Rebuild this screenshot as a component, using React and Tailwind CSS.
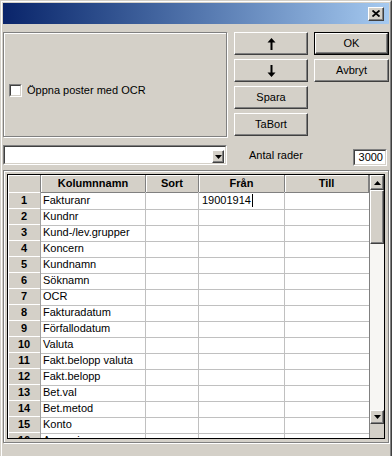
import React from "react";

const rows = [
  "Fakturanr",
  "Kundnr",
  "Kund-/lev.grupper",
  "Koncern",
  "Kundnamn",
  "Söknamn",
  "OCR",
  "Fakturadatum",
  "Förfallodatum",
  "Valuta",
  "Fakt.belopp valuta",
  "Fakt.belopp",
  "Bet.val",
  "Bet.metod",
  "Konto",
  "Ansvarig",
];

function Raised({ children, className = "" }) {
  return (
    <div
      className={`flex items-center justify-center border border-t-white border-l-white border-r-[#404040] border-b-[#404040] bg-[#d4d0c8] shadow-[inset_-1px_-1px_0_#808080] ${className}`}
    >
      {children}
    </div>
  );
}

function Btn({ children, def = false }) {
  if (def) {
    return (
      <div className="h-[23px] w-full border border-black">
        <Raised className="h-full w-full text-[11px] text-black">{children}</Raised>
      </div>
    );
  }
  return <Raised className="h-[23px] w-full text-[11px] text-black">{children}</Raised>;
}

function ArrowUp() {
  return (
    <svg width="9" height="12" viewBox="0 0 9 12">
      <path d="M4.5 0 L8.5 4.5 L5.5 4.5 L5.5 12 L3.5 12 L3.5 4.5 L0.5 4.5 Z" fill="#000" />
      <path d="M4.5 1.5 L7 4 M4.5 1.5 L2 4" stroke="#000" strokeWidth="0" />
    </svg>
  );
}

function ArrowDown() {
  return (
    <svg width="9" height="12" viewBox="0 0 9 12">
      <path d="M4.5 12 L8.5 7.5 L5.5 7.5 L5.5 0 L3.5 0 L3.5 7.5 L0.5 7.5 Z" fill="#000" />
    </svg>
  );
}

function TriUp() {
  return (
    <svg width="7" height="4" viewBox="0 0 7 4">
      <path d="M3.5 0 L7 4 L0 4 Z" fill="#000" />
    </svg>
  );
}

function TriDown() {
  return (
    <svg width="7" height="4" viewBox="0 0 7 4">
      <path d="M0 0 L7 0 L3.5 4 Z" fill="#000" />
    </svg>
  );
}

export default function App() {
  return (
    <div className="h-[456px] w-[392px] overflow-hidden bg-[#d4d0c8] font-['Liberation_Sans',Arial,sans-serif] text-[11px] text-black">
      <div className="flex h-[459px] w-[392px] flex-col border border-l-[#d4d0c8] border-t-[#d4d0c8] border-r-[#404040] border-b-[#404040]">
        <div className="flex h-full flex-col border border-l-white border-t-white border-r-[#808080] border-b-[#808080] p-px">
          {/* title bar */}
          <div className="flex h-[21px] shrink-0 items-center justify-end bg-linear-to-r from-[#0a246a] to-[#a6caf0] pr-[5px]">
            <Raised className="h-[14px] w-[16px]">
              <svg width="8" height="7" viewBox="0 0 8 7">
                <path d="M0.5 0.5 L7.5 6.5 M7.5 0.5 L0.5 6.5" stroke="#000" strokeWidth="1.8" />
              </svg>
            </Raised>
          </div>

          {/* top section */}
          <div className="mt-[8px] flex shrink-0">
            <div className="h-[105px] w-[224px] border border-[#808080] pl-[5px] pt-[51px] shadow-[inset_1px_1px_0_#fff,1px_1px_0_#fff]">
              <div className="flex items-center">
                <div className="h-[13px] w-[13px] border border-t-[#808080] border-l-[#808080] border-r-white border-b-white">
                  <div className="h-full w-full border border-t-[#404040] border-l-[#404040] border-r-[#d4d0c8] border-b-[#d4d0c8] bg-white" />
                </div>
                <span className="ml-[5px] leading-[13px]">Öppna poster med OCR</span>
              </div>
            </div>
            <div className="ml-[7px] flex w-[74px] flex-col gap-[4px]">
              <Btn>
                <ArrowUp />
              </Btn>
              <Btn>
                <ArrowDown />
              </Btn>
              <Btn>Spara</Btn>
              <Btn>TaBort</Btn>
            </div>
            <div className="ml-[6px] flex w-[75px] flex-col gap-[4px]">
              <Btn def>OK</Btn>
              <Btn>Avbryt</Btn>
            </div>
          </div>

          {/* combo row */}
          <div className="mt-[8px] flex h-[20px] shrink-0 items-center">
            <div className="h-[20px] w-[224px] border border-t-[#808080] border-l-[#808080] border-r-white border-b-white">
              <div className="flex h-full w-full items-end justify-end border border-t-[#404040] border-l-[#404040] border-r-[#d4d0c8] border-b-[#d4d0c8] bg-white pr-px">
                <Raised className="h-[13px] w-[12px]">
                  <TriDown />
                </Raised>
              </div>
            </div>
            <span className="ml-[22px]">Antal rader</span>
            <div className="ml-auto mr-[2px] mt-[4px] h-[17px] w-[34px] border border-t-[#808080] border-l-[#808080] border-r-white border-b-white">
              <div className="flex h-full w-full items-center justify-end border border-t-[#404040] border-l-[#404040] border-r-[#d4d0c8] border-b-[#d4d0c8] bg-white pr-[2px] leading-none">
                3000
              </div>
            </div>
          </div>

          {/* grid frame */}
          <div className="mt-[5px] h-[273px] shrink-0 border border-[#808080] p-[3px] shadow-[inset_1px_1px_0_#fff,1px_1px_0_#fff]">
            <div className="flex h-full w-full border border-black bg-white">
              <div className="flex min-w-0 flex-1 flex-col overflow-hidden">
                <div className="grid h-[17px] shrink-0 grid-cols-[33px_105px_53px_86px_1fr] bg-[#d4d0c8] font-bold">
                  <div className="border-b border-r border-[#808080] shadow-[inset_1px_1px_0_#fff]" />
                  <div className="flex items-center justify-center border-b border-r border-[#808080] shadow-[inset_1px_1px_0_#fff]">Kolumnnamn</div>
                  <div className="flex items-center justify-center border-b border-r border-[#808080] shadow-[inset_1px_1px_0_#fff]">Sort</div>
                  <div className="flex items-center justify-center border-b border-r border-[#808080] shadow-[inset_1px_1px_0_#fff]">Från</div>
                  <div className="flex items-center justify-center border-b border-r border-[#808080] shadow-[inset_1px_1px_0_#fff]">Till</div>
                </div>
                {rows.map((name, i) => (
                  <div key={i} className="grid h-[16px] shrink-0 grid-cols-[33px_105px_53px_86px_1fr]">
                    <div className="flex items-center justify-center border-b border-r border-[#a0a0a0] bg-[#d4d0c8] font-bold shadow-[inset_1px_1px_0_#fff]">
                      {i + 1}
                    </div>
                    <div className="flex items-center border-b border-r border-[#c0c0c0] pl-[2px]">{name}</div>
                    <div className="border-b border-r border-[#c0c0c0]" />
                    <div className="flex items-center border-b border-r border-[#c0c0c0] pl-[3px]">
                      {i === 0 ? (
                        <>
                          <span>19001914</span>
                          <span className="ml-px inline-block h-[13px] w-px bg-black" />
                        </>
                      ) : null}
                    </div>
                    <div className="border-b border-[#c0c0c0]" />
                  </div>
                ))}
              </div>
              <div className="flex w-[15px] shrink-0 flex-col border-l border-[#808080]">
                <Raised className="h-[15px] w-full">
                  <TriUp />
                </Raised>
                <Raised className="h-[54px] w-full" />
                <div className="flex-1 bg-[#f7f6f3]" />
                <Raised className="h-[14px] w-full">
                  <TriDown />
                </Raised>
                <div className="h-[14px] bg-[#d4d0c8]" />
              </div>
            </div>
          </div>
        </div>
      </div>
    </div>
  );
}
